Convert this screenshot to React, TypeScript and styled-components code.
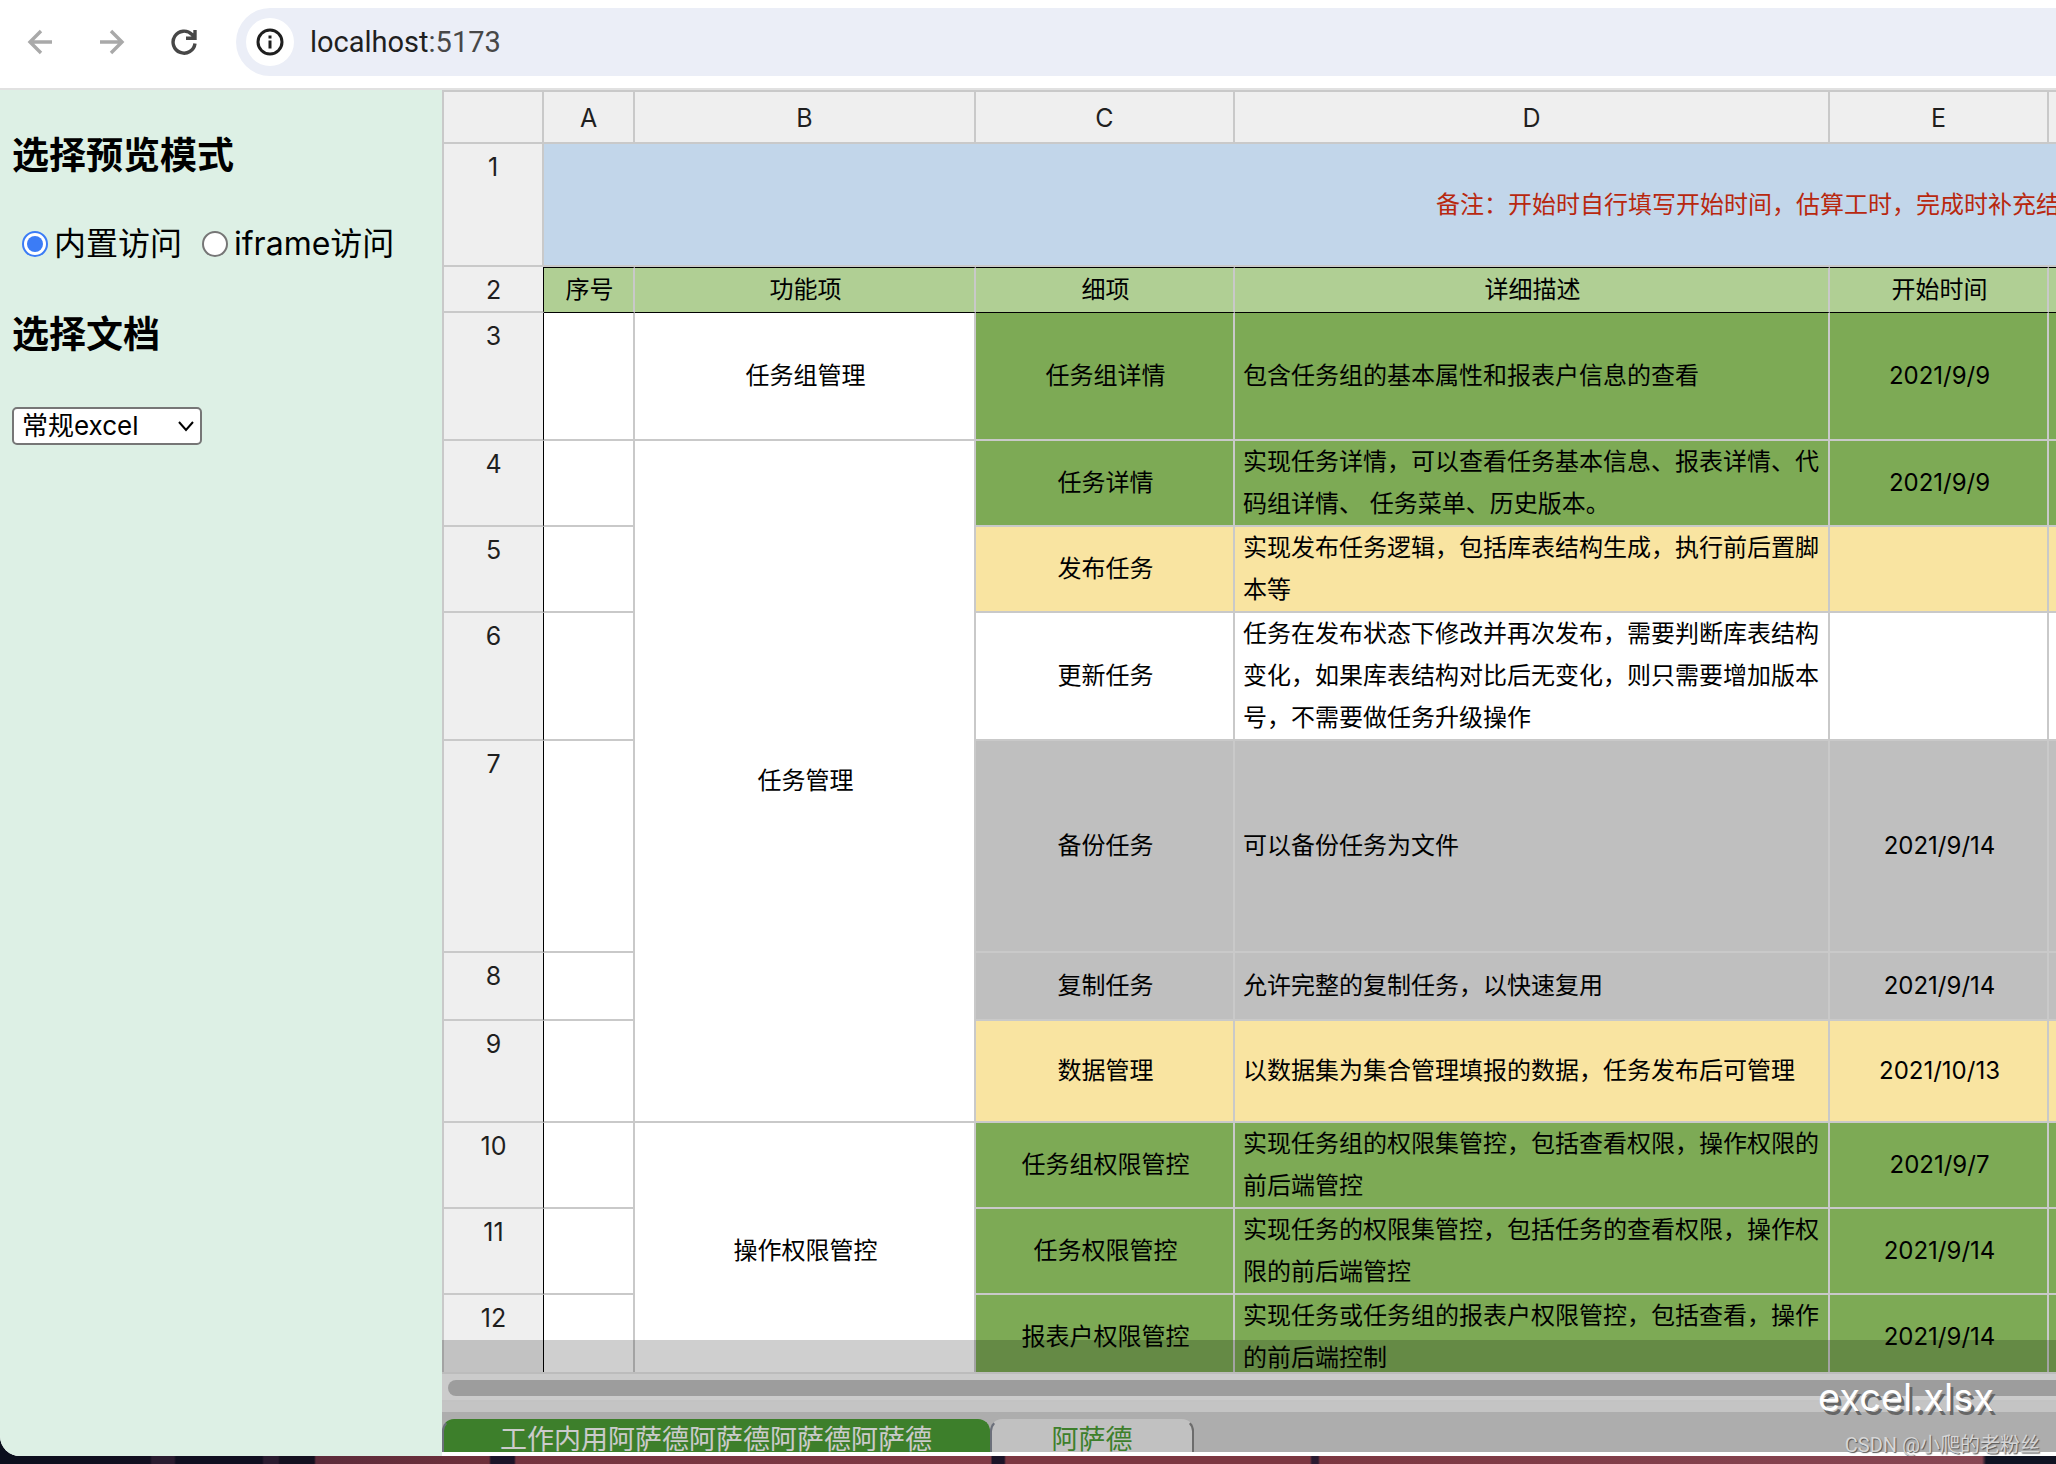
import React from "react";
import styled, { createGlobalStyle } from "styled-components";

const SANS = `Inter, "Noto Sans CJK SC", sans-serif`;

const GlobalStyle = createGlobalStyle`
  * { box-sizing: border-box; }
  html, body, #root { height: 100%; }
  body { margin: 0; font-family: ${SANS}; color: #000; background: #1b1424; overflow: hidden; }
`;

const Desktop = styled.div`
  height: 100vh;
  padding-bottom: 8px;
  background: linear-gradient(90deg, #0b0f1d 0, #120f20 150px, #2a1c30 152px, #2a1c30 174px, #100f20 176px,
    #100f20 262px, #2a1c30 264px, #2a1c30 278px, #14101f 280px, #14101f 314px, #5c2b3a 316px,
    #6e303b 489px, #1c1428 491px, #1c1428 514px, #74343f 516px, #803a45 991px, #1c1428 992px, #1c1428 1004px,
    #7c3741 1006px, #7c3741 1310px, #2a1a30 1312px, #2a1a30 1318px, #7c3741 1320px, #884754 1982px, #101222 1986px, #101222 100%);
`;

const Window = styled.div`
  display: flex;
  flex-direction: column;
  height: 100%;
  overflow: hidden;
  background: #fff;
  border-bottom-left-radius: 20px;
`;

const Toolbar = styled.header`
  display: flex;
  align-items: center;
  flex: none;
  height: 90px;
  padding: 0 0 4px 20px;
  border-bottom: 2px solid #e1e1e1;
  background: #fff;
`;

const NavButton = styled.button<{ $dim?: boolean }>`
  display: grid;
  place-items: center;
  width: 40px;
  height: 40px;
  margin-right: 32px;
  padding: 0;
  border: 0;
  background: none;
  color: ${(p) => (p.$dim ? "#a9a9a9" : "#474747")};
`;

const AddressBar = styled.div`
  display: flex;
  align-items: center;
  flex: 1;
  gap: 8px;
  height: 68px;
  padding-left: 10px;
  border-radius: 34px 0 0 34px;
  background: #ebeef7;
`;

const SiteInfo = styled.button`
  display: grid;
  place-items: center;
  width: 48px;
  height: 48px;
  padding: 0;
  border: 0;
  border-radius: 50%;
  background: #fff;
  color: #1f1f1f;
`;

const Url = styled.div`
  padding-left: 8px;
  font: 29px/36px Roboto, sans-serif;
  color: #1f1f1f;
  span { color: #474747; }
`;

const Body = styled.div`
  display: flex;
  flex: 1;
  min-height: 0;
`;

const Sidebar = styled.aside`
  flex: none;
  width: 442px;
  padding: 40px 12px;
  background: #ddf0e5;
`;

const Heading = styled.h3`
  margin: 0 0 40px;
  font-size: 37px;
  line-height: 52px;
  font-weight: 700;
`;

const Modes = styled.div`
  display: flex;
  gap: 20px;
  margin-bottom: 44px;
  padding-left: 10px;
`;

const Mode = styled.label`
  display: flex;
  align-items: center;
  gap: 6px;
  font-size: 32px;
  line-height: 43px;
`;

const Radio = styled.input`
  appearance: none;
  display: grid;
  place-items: center;
  width: 26px;
  height: 26px;
  margin: 0;
  border: 2px solid #767676;
  border-radius: 50%;
  background: #fff;
  &:checked { border-color: #3b7cf6; }
  &:checked::before {
    content: "";
    width: 16px;
    height: 16px;
    border-radius: 50%;
    background: #3b7cf6;
  }
`;

const Picker = styled.div`
  position: relative;
  width: 190px;
  margin-top: 46px;
`;

const Select = styled.select`
  appearance: none;
  display: block;
  width: 100%;
  height: 38px;
  padding: 0 8px;
  border: 2px solid #767676;
  border-radius: 5px;
  background: #fff;
  color: #000;
  font: 26px/34px ${SANS};
`;

const Chevron = styled.svg`
  position: absolute;
  right: 8px;
  top: 13px;
  pointer-events: none;
`;

const Preview = styled.main`
  position: relative;
  display: flex;
  flex: 1;
  flex-direction: column;
  min-width: 0;
  padding-bottom: 4px;
`;

const SheetView = styled.div`
  flex: 1;
  min-height: 0;
  overflow: hidden;
  border-top: 2px solid #c9c9c9;
  border-left: 2px solid #c9c9c9;
`;

const Sheet = styled.table`
  width: 2508px;
  table-layout: fixed;
  border-collapse: separate;
  border-spacing: 0;
  font-size: 24px;
  line-height: 42px;
`;

const Col = styled.col<{ $w: number }>`
  width: ${(p) => p.$w}px;
`;

const Row = styled.tr<{ $h: number }>`
  height: ${(p) => p.$h}px;
`;

const HeadCell = styled.th<{ $ink?: boolean; $top?: boolean }>`
  padding: 2px 0 0;
  border-right: ${(p) => (p.$ink ? "1px solid #000" : "2px solid #c9c9c9")};
  border-bottom: 2px solid #c9c9c9;
  background: #efefef;
  color: #1f1f1f;
  font-size: 25px;
  font-weight: 400;
  vertical-align: ${(p) => (p.$top ? "top" : "middle")};
`;

const fills = {
  blue: "#c2d6ea",
  lime: "#b0cf94",
  green: "#7daa55",
  yellow: "#f9e4a1",
  grey: "#bfbfbf",
  white: "#fff",
};
type Fill = keyof typeof fills;

const Cell = styled.td<{ $fill: Fill; $left?: boolean }>`
  padding: 0 6px 0 8px;
  border-right: 2px solid #c9c9c9;
  border-bottom: 2px solid #c9c9c9;
  background: ${(p) => fills[p.$fill]};
  text-align: ${(p) => (p.$left ? "left" : "center")};
  vertical-align: middle;
`;

const NoteCell = styled(Cell)`
  color: #b8280f;
`;

const TitleCell = styled(Cell)`
  border-top: 1px solid #000;
  border-bottom: 1px solid #000;
`;

const ScrollTrack = styled.div`
  flex: none;
  height: 30px;
  padding: 6px 0 6px 6px;
  border-top: 2px solid #e8e8e8;
  border-bottom: 2px solid #f0f0f0;
  background: #fafafa;
`;

const ScrollThumb = styled.div`
  width: 100%;
  height: 16px;
  border-radius: 8px 0 0 8px;
  background: #c2c2c2;
`;

const TabBar = styled.nav`
  display: flex;
  flex: none;
  height: 50px;
  padding-top: 7px;
  border-top: 10px solid #f2f2f2;
  background: #d5d5d5;
`;

const Tab = styled.button<{ $active?: boolean }>`
  min-width: 204px;
  height: 33px;
  padding: 2px 56px 0;
  border: 2px solid ${(p) => (p.$active ? "#4c9d35" : "#858585")};
  border-top-color: ${(p) => (p.$active ? "#4c9d35" : "#eee")};
  border-left-color: #858a98;
  border-bottom: 0;
  border-radius: 12px 12px 0 0;
  background: ${(p) => (p.$active ? "#4c9d35" : "#eee")};
  color: ${(p) => (p.$active ? "#fafafa" : "#4c9d35")};
  font: 27px/33px ${SANS};
  white-space: nowrap;
`;

const FileBanner = styled.div`
  position: absolute;
  inset: auto 0 4px 0;
  height: 112px;
  padding: 36px 62px 0;
  background: rgba(0, 0, 0, 0.19);
  color: #fff;
  font-size: 38px;
  line-height: 42px;
  text-align: right;
  text-shadow: 3px 4px 0 #666;
  pointer-events: none;
`;

const Credit = styled.div`
  position: absolute;
  right: 16px;
  bottom: 0;
  color: #d6d6d6;
  font: 20px/22px Roboto, "Noto Sans CJK SC", sans-serif;
  text-shadow: 1px 1px 1px #555;
`;

type SheetRow = {
  h: number;
  group?: [string, number];
  item: string;
  text: string;
  date: string;
  fill: Fill;
};

const rows: SheetRow[] = [
  { h: 128, group: ["任务组管理", 1], item: "任务组详情", text: "包含任务组的基本属性和报表户信息的查看", date: "2021/9/9", fill: "green" },
  { h: 86, group: ["任务管理", 6], item: "任务详情", text: "实现任务详情，可以查看任务基本信息、报表详情、代码组详情、 任务菜单、历史版本。", date: "2021/9/9", fill: "green" },
  { h: 86, item: "发布任务", text: "实现发布任务逻辑，包括库表结构生成，执行前后置脚本等", date: "", fill: "yellow" },
  { h: 128, item: "更新任务", text: "任务在发布状态下修改并再次发布，需要判断库表结构变化，如果库表结构对比后无变化，则只需要增加版本号，不需要做任务升级操作", date: "", fill: "white" },
  { h: 212, item: "备份任务", text: "可以备份任务为文件", date: "2021/9/14", fill: "grey" },
  { h: 68, item: "复制任务", text: "允许完整的复制任务，以快速复用", date: "2021/9/14", fill: "grey" },
  { h: 102, item: "数据管理", text: "以数据集为集合管理填报的数据，任务发布后可管理", date: "2021/10/13", fill: "yellow" },
  { h: 86, group: ["操作权限管控", 3], item: "任务组权限管控", text: "实现任务组的权限集管控，包括查看权限，操作权限的前后端管控", date: "2021/9/7", fill: "green" },
  { h: 86, item: "任务权限管控", text: "实现任务的权限集管控，包括任务的查看权限，操作权限的前后端管控", date: "2021/9/14", fill: "green" },
  { h: 86, item: "报表户权限管控", text: "实现任务或任务组的报表户权限管控，包括查看，操作的前后端控制", date: "2021/9/14", fill: "green" },
];

const columns = [
  { name: "A", w: 91 },
  { name: "B", w: 341 },
  { name: "C", w: 259 },
  { name: "D", w: 595 },
  { name: "E", w: 219 },
  { name: "", w: 903 },
];

const titles = ["序号", "功能项", "细项", "详细描述", "开始时间", ""];

export default function App() {
  return (
    <>
      <GlobalStyle />
      <Desktop>
        <Window>
          <Toolbar>
            <NavButton $dim aria-label="Back">
              <svg width="26" height="28" viewBox="0 0 26 28" fill="none" stroke="currentColor" strokeWidth="3.400">
                <path d="M25 14H3M14 3L3 14L14 25" />
              </svg>
            </NavButton>
            <NavButton $dim aria-label="Forward">
              <svg width="26" height="28" viewBox="0 0 26 28" fill="none" stroke="currentColor" strokeWidth="3.400">
                <path d="M1 14H23M12 3L23 14L12 25" />
              </svg>
            </NavButton>
            <NavButton aria-label="Reload">
              <svg width="28" height="28" viewBox="0 0 28 28" fill="none" stroke="currentColor" strokeWidth="3.400">
                <path d="M25 15.500A11 11 0 1 1 22 6.500L25 9.500M25 2V10.300H16" />
              </svg>
            </NavButton>
            <AddressBar>
              <SiteInfo aria-label="Site information">
                <svg width="28" height="28" viewBox="0 0 28 28" fill="none" stroke="currentColor" strokeWidth="3">
                  <circle cx="14" cy="14" r="12" />
                  <path d="M14 12.500V20.500M14 7.500V10.500" />
                </svg>
              </SiteInfo>
              <Url>localhost<span>:5173</span></Url>
            </AddressBar>
          </Toolbar>
          <Body>
            <Sidebar>
              <Heading>选择预览模式</Heading>
              <Modes>
                <Mode>
                  <Radio type="radio" name="mode" defaultChecked />
                  内置访问
                </Mode>
                <Mode>
                  <Radio type="radio" name="mode" />
                  iframe访问
                </Mode>
              </Modes>
              <Heading id="doc-label">选择文档</Heading>
              <Picker>
                <Select aria-labelledby="doc-label">
                  <option>常规excel</option>
                </Select>
                <Chevron width="16" height="12" viewBox="0 0 16 12" fill="none" stroke="#000" strokeWidth="2">
                  <path d="M1 2L8 10L15 2" />
                </Chevron>
              </Picker>
            </Sidebar>
            <Preview>
              <SheetView>
                <Sheet>
                  <colgroup>
                    <Col $w={100} />
                    {columns.map((c, i) => <Col key={i} $w={c.w} />)}
                  </colgroup>
                  <thead>
                    <Row $h={52}>
                      <HeadCell />
                      {columns.map((c, i) => <HeadCell key={i} scope="col">{c.name}</HeadCell>)}
                    </Row>
                  </thead>
                  <tbody>
                    <Row $h={123}>
                      <HeadCell $top scope="row">1</HeadCell>
                      <NoteCell $fill="blue" colSpan={6}>备注：开始时自行填写开始时间，估算工时，完成时补充结</NoteCell>
                    </Row>
                    <Row $h={46}>
                      <HeadCell $top $ink scope="row">2</HeadCell>
                      {titles.map((t, i) => <TitleCell key={i} $fill="lime">{t}</TitleCell>)}
                    </Row>
                    {rows.map((r, i) => (
                      <Row key={r.item} $h={r.h}>
                        <HeadCell $top $ink scope="row">{i + 3}</HeadCell>
                        <Cell $fill="white" />
                        {r.group && <Cell $fill="white" rowSpan={r.group[1]}>{r.group[0]}</Cell>}
                        <Cell $fill={r.fill}>{r.item}</Cell>
                        <Cell $fill={r.fill} $left>{r.text}</Cell>
                        <Cell $fill={r.fill}>{r.date}</Cell>
                        <Cell $fill={r.fill} />
                      </Row>
                    ))}
                  </tbody>
                </Sheet>
              </SheetView>
              <ScrollTrack><ScrollThumb /></ScrollTrack>
              <TabBar>
                <Tab $active>工作内用阿萨德阿萨德阿萨德阿萨德</Tab>
                <Tab>阿萨德</Tab>
              </TabBar>
              <FileBanner>excel.xlsx</FileBanner>
              <Credit>CSDN @小爬的老粉丝</Credit>
            </Preview>
          </Body>
        </Window>
      </Desktop>
    </>
  );
}
